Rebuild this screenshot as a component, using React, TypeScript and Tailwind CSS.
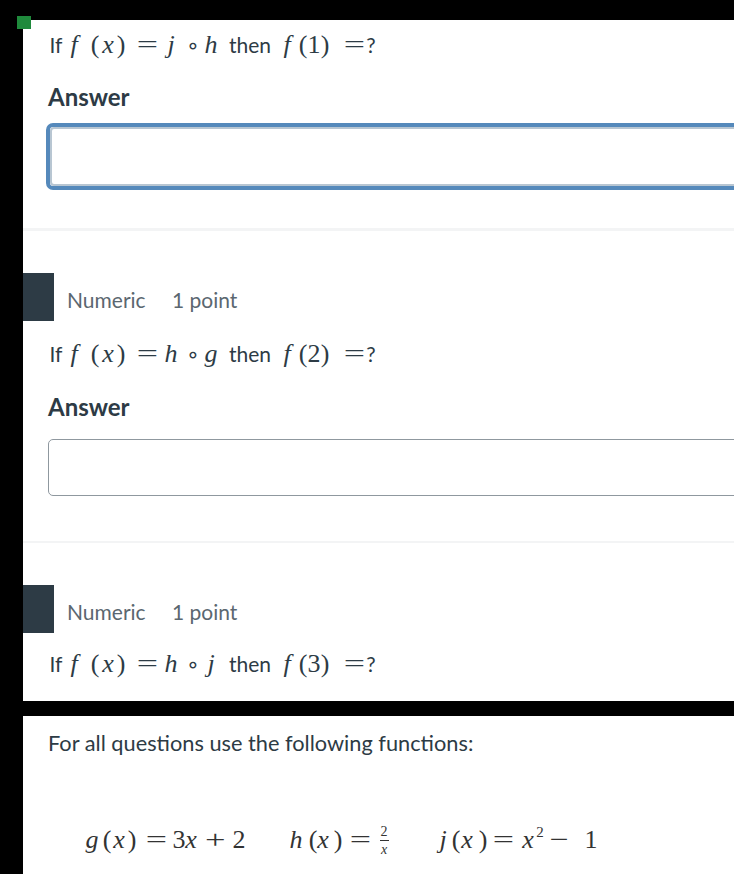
import React from "react";

const lato = { fontFamily: "Lato, 'Open Sans', sans-serif" };
const serif = { fontFamily: "'Liberation Serif', 'DejaVu Serif', serif" };

function Tk({ ml, children, cls = "" }: { ml: string; children: React.ReactNode; cls?: string }) {
  return (
    <span className={"inline-flex w-0 min-w-0 shrink-0 justify-center whitespace-nowrap " + ml + " " + cls}>
      {children}
    </span>
  );
}

function Var({ c }: { c: string }) {
  return <span className="italic text-[26px]" style={serif}>{c}</span>;
}
function Up({ c }: { c: string }) {
  return <span className="text-[26px]" style={serif}>{c}</span>;
}
function Eq() {
  return <span className="inline-block scale-x-[1.45] text-[26px]" style={serif}>=</span>;
}
function Plus() {
  return <span className="inline-block scale-x-[1.4] text-[26px]" style={serif}>+</span>;
}
function Minus() {
  return <span className="inline-block scale-x-[1.3] text-[26px]" style={serif}>{"\u2212"}</span>;
}
function Ring() {
  return <span className="text-[22px]" style={{ fontFamily: "'DejaVu Sans', sans-serif" }}>{"\u2218"}</span>;
}
function Txt({ c }: { c: string }) {
  return <span className="text-[21px]" style={lato}>{c}</span>;
}

function Question({ a, b, n }: { a: string; b: string; n: string }) {
  return (
    <div className="flex items-baseline h-[30px] leading-[30px] text-[#2d3b45]">
      <Tk ml="ml-[8px]"><Txt c="If" /></Tk>
      <Tk ml="ml-[18px]"><Var c="f" /></Tk>
      <Tk ml="ml-[21px]"><Up c="(" /></Tk>
      <Tk ml="ml-[13px]"><Var c="x" /></Tk>
      <Tk ml="ml-[13px]"><Up c=")" /></Tk>
      <Tk ml="ml-[26px]"><Eq /></Tk>
      <Tk ml="ml-[24px]"><Var c={a} /></Tk>
      <Tk ml="ml-[22px]"><Ring /></Tk>
      <Tk ml="ml-[18px]"><Var c={b} /></Tk>
      <Tk ml="ml-[39px]"><Txt c="then" /></Tk>
      <Tk ml="ml-[37px]"><Var c="f" /></Tk>
      <Tk ml="ml-[16px]"><Up c="(" /></Tk>
      <Tk ml="ml-[11px]"><Up c={n} /></Tk>
      <Tk ml="ml-[11px]"><Up c=")" /></Tk>
      <Tk ml="ml-[29px]"><Eq /></Tk>
      <Tk ml="ml-[17px]"><Txt c="?" /></Tk>
    </div>
  );
}

function Meta() {
  return (
    <div className="flex items-center h-[48px]">
      <div className="w-[31px] h-[48px] bg-[#2d3b45]" />
      <div className="ml-[13px] mt-[5px] flex text-[21px] text-[#5b6770] leading-[30px]">
        <span className="w-[105px]">Numeric</span>
        <span>1 point</span>
      </div>
    </div>
  );
}

function AnswerLabel({ mt }: { mt: string }) {
  return (
    <div className={"pl-[25px] text-[24px] font-bold text-[#2d3b45] leading-[30px] h-[30px] " + mt}>Answer</div>
  );
}

export default function App() {
  return (
    <div className="relative h-[874px] w-[734px] overflow-hidden bg-black pt-[20px] pl-[23px]" style={lato}>
      <div className="absolute left-[17px] top-[16px] h-[13px] w-[14px] bg-[#1f8a3c]" />
      <div className="h-[681px] bg-white overflow-hidden">
        <div className="pl-[25px] pt-[10px]">
          <Question a="j" b="h" n="1" />
        </div>
        <AnswerLabel mt="mt-[22px]" />
        <div className="mt-[11px] ml-[23px] w-[720px] h-[67px] rounded-[7px] border-[4px] border-[#5589bb] p-0">
          <div className="h-full w-full rounded-[4px] border-2 border-[#b8c6d2]" />
        </div>
        <div className="mt-[38px] h-[3px] bg-[#f3f4f5]" />

        <div className="mt-[42px]">
          <Meta />
        </div>
        <div className="pl-[25px] mt-[18px]">
          <Question a="h" b="g" n="2" />
        </div>
        <AnswerLabel mt="mt-[23px]" />
        <div className="mt-[17px] ml-[25px] w-[720px] h-[57px] rounded-[5px] border border-[#8f989f]" />
        <div className="mt-[45px] h-[2px] bg-[#f3f4f5]" />

        <div className="mt-[42px]">
          <Meta />
        </div>
        <div className="pl-[25px] mt-[16px]">
          <Question a="h" b="j" n="3" />
        </div>
      </div>
      <div className="h-[15px]" />
      <div className="h-[158px] bg-white pl-[25px] pt-[12px] text-[#2d3b45]">
        <div className="text-[21.75px] leading-[30px] h-[30px]">For all questions use the following functions:</div>
        <div className="mt-[67px] flex items-baseline h-[30px] leading-[30px] text-[#333]">
          <Tk ml="ml-[44px]"><Var c="g" /></Tk>
          <Tk ml="ml-[15px]"><Up c="(" /></Tk>
          <Tk ml="ml-[12px]"><Var c="x" /></Tk>
          <Tk ml="ml-[13px]"><Up c=")" /></Tk>
          <Tk ml="ml-[24px]"><Eq /></Tk>
          <Tk ml="ml-[23px]"><Up c="3" /></Tk>
          <Tk ml="ml-[12px]"><Var c="x" /></Tk>
          <Tk ml="ml-[24px]"><Plus /></Tk>
          <Tk ml="ml-[24px]"><Up c="2" /></Tk>

          <Tk ml="ml-[57px]"><Var c="h" /></Tk>
          <Tk ml="ml-[17px]"><Up c="(" /></Tk>
          <Tk ml="ml-[10px]"><Var c="x" /></Tk>
          <Tk ml="ml-[15px]"><Up c=")" /></Tk>
          <Tk ml="ml-[22px]"><Eq /></Tk>
          <Tk ml="ml-[24px]" cls="-translate-y-[12px]">
            <span className="inline-flex flex-col items-center" style={serif}>
              <span className="text-[14px] leading-[13px]">2</span>
              <span className="mt-[2px] h-px w-[9px] bg-[#333]" />
              <span className="mt-[2px] text-[14px] leading-[13px] italic">x</span>
            </span>
          </Tk>

          <Tk ml="ml-[59px]"><Var c="j" /></Tk>
          <Tk ml="ml-[13px]"><Up c="(" /></Tk>
          <Tk ml="ml-[11px]"><Var c="x" /></Tk>
          <Tk ml="ml-[16px]"><Up c=")" /></Tk>
          <Tk ml="ml-[20px]"><Eq /></Tk>
          <Tk ml="ml-[25px]"><Var c="x" /></Tk>
          <Tk ml="ml-[12px]" cls="-translate-y-[11px]">
            <span className="text-[15px]" style={serif}>2</span>
          </Tk>
          <Tk ml="ml-[19px]"><Minus /></Tk>
          <Tk ml="ml-[32px]"><Up c="1" /></Tk>
        </div>
      </div>
    </div>
  );
}
